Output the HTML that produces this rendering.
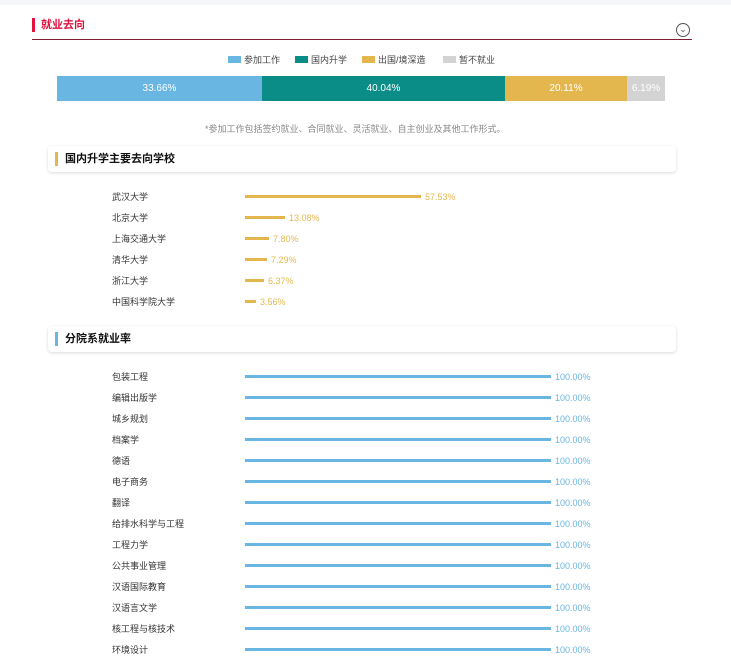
<!DOCTYPE html><html><head><meta charset="utf-8"><style>
body{margin:0;width:731px;height:663px;overflow:hidden;background:#fff;font-family:"Liberation Sans","Noto Sans CJK SC",sans-serif;position:relative}
.a{position:absolute}
.top{left:0;top:0;width:731px;height:5px;background:#f5f6fa}
.lab{font-size:9px;color:#333;left:112px;line-height:12px}
.bar{height:3px;left:245px}
.pct{font-size:9px;line-height:12px}
.card{left:48px;width:628px;height:26px;background:#fff;border-radius:4px;box-shadow:0 1px 3px rgba(0,0,0,.15)}
.card b{position:absolute;left:7px;top:6px;width:3px;height:14px}
.card span{position:absolute;left:17px;top:6px;font-size:11px;font-weight:bold;color:#111;line-height:14px}
.seg{position:absolute;top:0;height:25px;color:#fff;font-size:10px;line-height:25px;text-align:center}
.lg{font-size:9px;color:#444;top:55px;line-height:11px}
.lg i{display:inline-block;width:13px;height:7px;margin-right:3px;vertical-align:0}
</style></head><body>
<div class="a top"></div>
<div class="a" style="left:32px;top:18px;width:3px;height:14px;background:#e0123f"></div>
<div class="a" style="left:41px;top:18px;font-size:11px;font-weight:bold;color:#e0123f;line-height:14px">就业去向</div>
<div class="a" style="left:32px;top:39px;width:660px;height:1px;background:#7a2030"></div>
<div class="a" style="left:676px;top:23px;width:12px;height:12px;border:1px solid #555;border-radius:50%;font-size:9px;line-height:10px;text-align:center;color:#555">⌄</div>
<div class="a lg" style="left:228px"><i style="background:#69b6e2"></i>参加工作</div>
<div class="a lg" style="left:295px"><i style="background:#0a8c87"></i>国内升学</div>
<div class="a lg" style="left:362px"><i style="background:#e4b74e"></i>出国/境深造</div>
<div class="a lg" style="left:443px"><i style="background:#d3d3d3"></i>暂不就业</div>
<div class="a" style="left:57px;top:76px;width:608px;height:26px">
<div class="seg" style="left:0;width:205px;background:#69b6e2">33.66%</div>
<div class="seg" style="left:205px;width:243px;background:#0a8c87">40.04%</div>
<div class="seg" style="left:448px;width:122px;background:#e4b74e">20.11%</div>
<div class="seg" style="left:570px;width:38px;background:#d3d3d3">6.19%</div>
</div>
<div class="a" style="left:205px;top:122px;font-size:9px;color:#888;white-space:nowrap">*参加工作包括签约就业、合同就业、灵活就业、自主创业及其他工作形式。</div>
<div class="a card" style="top:146px"><b style="background:#e4b74e"></b><span>国内升学主要去向学校</span></div>
<div class="a card" style="top:326px"><b style="background:#69b6e2"></b><span>分院系就业率</span></div>
<div id="l1"></div>
<script>
var d1=[["武汉大学",57.53],["北京大学",13.08],["上海交通大学",7.80],["清华大学",7.29],["浙江大学",6.37],["中国科学院大学",3.56]];
var h="";
d1.forEach(function(r,i){var y=191+21*i,w=Math.round(306*r[1]/100);
h+='<div class="a lab" style="top:'+y+'px">'+r[0]+'</div><div class="a bar" style="top:'+(y+4)+'px;width:'+w+'px;background:#e4b74e"></div><div class="a pct" style="top:'+y+'px;left:'+(249+w)+'px;color:#e4b74e">'+r[1].toFixed(2)+'%</div>';});
var d2=["包装工程","编辑出版学","城乡规划","档案学","德语","电子商务","翻译","给排水科学与工程","工程力学","公共事业管理","汉语国际教育","汉语言文学","核工程与核技术","环境设计"];
d2.forEach(function(n,i){var y=371+21*i;
h+='<div class="a lab" style="top:'+y+'px">'+n+'</div><div class="a bar" style="top:'+(y+4)+'px;width:306px;background:#69b6e2"></div><div class="a pct" style="top:'+y+'px;left:555px;color:#69b6e2">100.00%</div>';});
document.getElementById("l1").innerHTML=h;
</script>
</body></html>
